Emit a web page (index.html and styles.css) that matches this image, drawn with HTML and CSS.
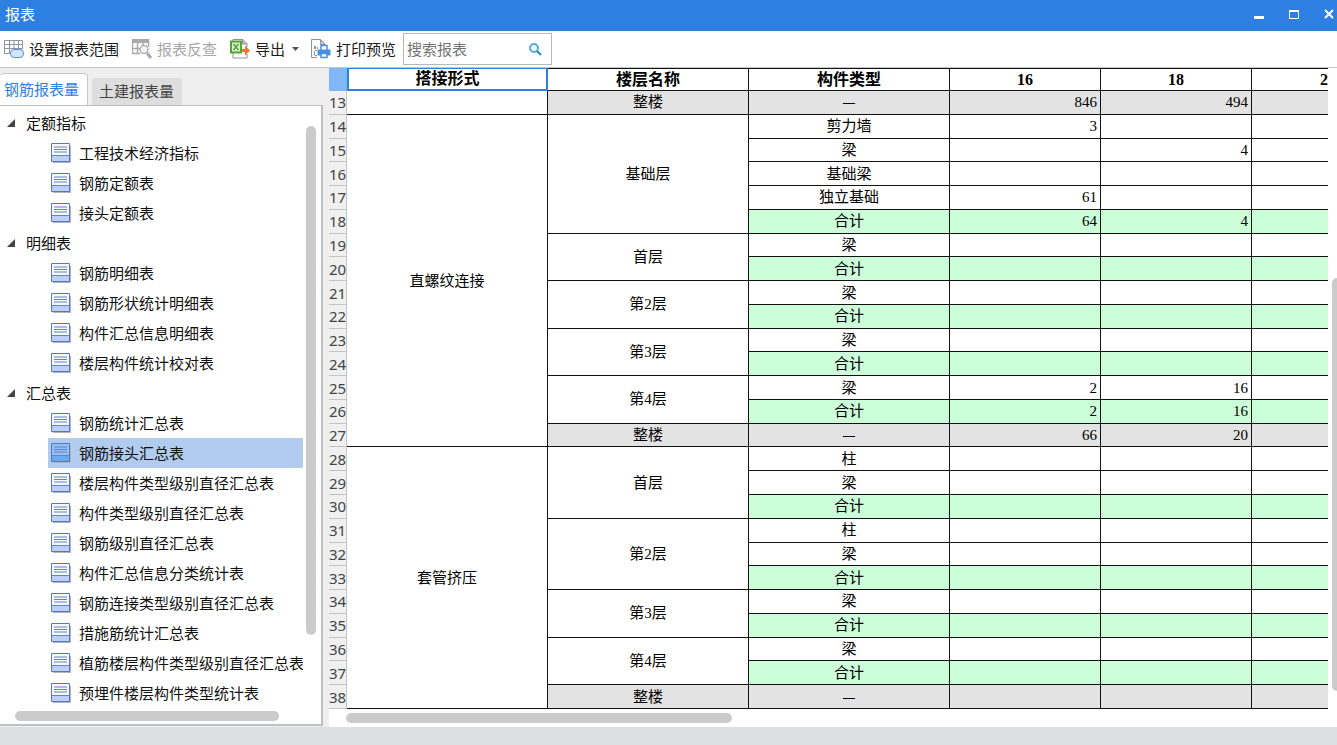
FILE: index.html
```html
<!DOCTYPE html>
<html lang="zh-CN">
<head>
<meta charset="utf-8">
<title>报表</title>
<link rel="stylesheet" href="styles.css">
</head>
<body>
<svg class="defs" aria-hidden="true">
  <symbol id="doc" viewBox="0 0 20 20">
    <path d="M2 3h18v17H2z" fill="#b4b4ba"/>
    <path d="M.5.5h18v18H.5z" fill="var(--paper,#f6f8ff)" stroke="#5578bd"/>
    <path d="M1 13h17v5H1z" fill="var(--foot,#bccfff)"/>
    <path d="M1 12.5h17" stroke="#6483cc"/>
    <path d="M3 4h13M3 6.500h13M3 9h13" stroke="#6580c4"/>
  </symbol>
</svg>
<div class="window">
  <header class="titlebar">
    <h1>报表</h1>
    <div class="winbtns">
      <button aria-label="最小化"><svg width="11" height="11" viewBox="0 0 11 11"><path d="M0 7h10v3H0z" fill="#fff"/></svg></button>
      <button aria-label="最大化"><svg width="11" height="11" viewBox="0 0 11 11"><path d="M.5 1.500h9v8h-9z" fill="none" stroke="#fff"/><path d="M0 1h10v2H0z" fill="#fff"/></svg></button>
      <button aria-label="关闭"><svg width="11" height="11" viewBox="0 0 11 11"><path d="M1 1l8 8M9 1l-8 8" stroke="#fff" stroke-width="2"/></svg></button>
    </div>
  </header>

  <div class="toolbar">
    <button class="tool"><svg width="20" height="20" viewBox="0 0 20 20"><path d="M.5 1.500h18v13H.5z" fill="#fff"/><path d="M.5 15V1.500h18V10M0 5.500h19M0 9.500h19M0 14.500h6M5.500 1v14M10 1v9M14.500 1v9" fill="none" stroke="#8d959e"/><rect x="6.500" y="10.500" width="13" height="8" rx="3.500" fill="#d3e5fb" stroke="#5a94dc"/></svg>设置报表范围</button>
    <button class="tool" disabled><svg width="20" height="20" viewBox="0 0 20 20"><path d="M0 0h17v4H0z" fill="#aaa"/><path d="M.5 15V.5h16V8M1 9.500h7M0 14.500h8M5.500 1v14M11 1v5" fill="none" stroke="#aaa" stroke-width="1.500"/><circle cx="12" cy="10.500" r="4" fill="#f4f4f4" stroke="#b0b0b0" stroke-width="1.500"/><path d="M15 14l4 5" stroke="#aaa" stroke-width="3"/></svg>报表反查</button>
    <button class="tool"><svg width="20" height="20" viewBox="0 0 20 20"><path d="M3 2V.5h10l4 4V8M3 14v5h14v-4" fill="none" stroke="#8b939b"/><path d="M12.500.5v4.500H17" fill="#b8bec5" stroke="#8b939b"/><path d="M1 2.500h10v11H1z" fill="#d9edcb" stroke="#5aa23a" stroke-width="2"/><path d="M3.500 5l5 6M8.500 5l-5 6" stroke="#5aa23a" stroke-width="1.500"/><path d="M12 10h3V6.500l5 5-5 5V13h-3z" fill="#f1762a"/></svg>导出<svg class="caret" width="7" height="5" viewBox="0 0 7 5"><path d="M0 0h7L3.500 4z" fill="#555"/></svg></button>
    <button class="tool"><svg width="20" height="20" viewBox="0 0 20 20"><path d="M6 18.500H.5V.5h9l5 5" fill="none" stroke="#8b939b"/><path d="M9.500.5v5H14z" fill="#cfd4d9" stroke="#8b939b"/><path d="M3 7h2v3H3zM6 8h1v2H6zM3 12h1v4H3zM4 11h2v1H4zM4 16h2v1H4z" fill="#8b939b"/><path d="M10 11V6.500h6V11" fill="#fff" stroke="#4a90e2" stroke-width="1.500"/><path d="M6.500 10.500h13v6h-13z" fill="#4a90e2"/><path d="M10 14.500h6v4h-6z" fill="#fff" stroke="#4a90e2" stroke-width="1.500"/></svg>打印预览</button>
    <label class="search"><input type="text" placeholder="搜索报表" aria-label="搜索报表"><svg width="13" height="13" viewBox="0 0 13 13"><circle cx="5" cy="5" r="4" fill="#eef8fd" stroke="#58acd8" stroke-width="2"/><path d="M8 8l4 4" stroke="#2787c4" stroke-width="2"/></svg></label>
  </div>

  <main class="content">
    <aside class="sidebar">
      <nav class="tabs"><button class="tab active">钢筋报表量</button><button class="tab">土建报表量</button></nav>
      <div class="treebox">
        <ul class="tree">
          <li class="group"><svg width="8" height="8" viewBox="0 0 8 8"><path d="M8 0v8H0z"/></svg>定额指标</li>
          <li><svg class="ic"><use href="#doc"/></svg>工程技术经济指标</li>
          <li><svg class="ic"><use href="#doc"/></svg>钢筋定额表</li>
          <li><svg class="ic"><use href="#doc"/></svg>接头定额表</li>
          <li class="group"><svg width="8" height="8" viewBox="0 0 8 8"><path d="M8 0v8H0z"/></svg>明细表</li>
          <li><svg class="ic"><use href="#doc"/></svg>钢筋明细表</li>
          <li><svg class="ic"><use href="#doc"/></svg>钢筋形状统计明细表</li>
          <li><svg class="ic"><use href="#doc"/></svg>构件汇总信息明细表</li>
          <li><svg class="ic"><use href="#doc"/></svg>楼层构件统计校对表</li>
          <li class="group"><svg width="8" height="8" viewBox="0 0 8 8"><path d="M8 0v8H0z"/></svg>汇总表</li>
          <li><svg class="ic"><use href="#doc"/></svg>钢筋统计汇总表</li>
          <li class="selected"><svg class="ic"><use href="#doc"/></svg>钢筋接头汇总表</li>
          <li><svg class="ic"><use href="#doc"/></svg>楼层构件类型级别直径汇总表</li>
          <li><svg class="ic"><use href="#doc"/></svg>构件类型级别直径汇总表</li>
          <li><svg class="ic"><use href="#doc"/></svg>钢筋级别直径汇总表</li>
          <li><svg class="ic"><use href="#doc"/></svg>构件汇总信息分类统计表</li>
          <li><svg class="ic"><use href="#doc"/></svg>钢筋连接类型级别直径汇总表</li>
          <li><svg class="ic"><use href="#doc"/></svg>措施筋统计汇总表</li>
          <li><svg class="ic"><use href="#doc"/></svg>植筋楼层构件类型级别直径汇总表</li>
          <li><svg class="ic"><use href="#doc"/></svg>预埋件楼层构件类型统计表</li>
        </ul>
        <div class="vbar"><div class="thumb"></div></div>
        <div class="hbar"><div class="thumb"></div></div>
      </div>
    </aside>

    <section class="report">
      <div class="sheet">
        <table>
          <colgroup><col class="c-no"><col class="c-text"><col class="c-text"><col class="c-text"><col class="c-num"><col class="c-num"><col></colgroup>
          <thead>
            <tr><th class="corner"></th><th class="picked">搭接形式</th><th>楼层名称</th><th>构件类型</th><th>16</th><th>18</th><th class="cut">2</th></tr>
          </thead>
          <tbody>
            <tr class="total"><th>13</th><td class="plain"></td><td>整楼</td><td class="dash">—</td><td class="n">846</td><td class="n">494</td><td></td></tr>
            <tr><th>14</th><td rowspan="14" class="plain">直螺纹连接</td><td rowspan="5" class="plain">基础层</td><td>剪力墙</td><td class="n">3</td><td></td><td></td></tr>
            <tr><th>15</th><td>梁</td><td></td><td class="n">4</td><td></td></tr>
            <tr><th>16</th><td>基础梁</td><td></td><td></td><td></td></tr>
            <tr><th>17</th><td>独立基础</td><td class="n">61</td><td></td><td></td></tr>
            <tr class="sum"><th>18</th><td>合计</td><td class="n">64</td><td class="n">4</td><td></td></tr>
            <tr><th>19</th><td rowspan="2" class="plain">首层</td><td>梁</td><td></td><td></td><td></td></tr>
            <tr class="sum"><th>20</th><td>合计</td><td></td><td></td><td></td></tr>
            <tr><th>21</th><td rowspan="2" class="plain">第2层</td><td>梁</td><td></td><td></td><td></td></tr>
            <tr class="sum"><th>22</th><td>合计</td><td></td><td></td><td></td></tr>
            <tr><th>23</th><td rowspan="2" class="plain">第3层</td><td>梁</td><td></td><td></td><td></td></tr>
            <tr class="sum"><th>24</th><td>合计</td><td></td><td></td><td></td></tr>
            <tr><th>25</th><td rowspan="2" class="plain">第4层</td><td>梁</td><td class="n">2</td><td class="n">16</td><td></td></tr>
            <tr class="sum"><th>26</th><td>合计</td><td class="n">2</td><td class="n">16</td><td></td></tr>
            <tr class="total"><th>27</th><td>整楼</td><td class="dash">—</td><td class="n">66</td><td class="n">20</td><td></td></tr>
            <tr><th>28</th><td rowspan="11" class="plain">套管挤压</td><td rowspan="3" class="plain">首层</td><td>柱</td><td></td><td></td><td></td></tr>
            <tr><th>29</th><td>梁</td><td></td><td></td><td></td></tr>
            <tr class="sum"><th>30</th><td>合计</td><td></td><td></td><td></td></tr>
            <tr><th>31</th><td rowspan="3" class="plain">第2层</td><td>柱</td><td></td><td></td><td></td></tr>
            <tr><th>32</th><td>梁</td><td></td><td></td><td></td></tr>
            <tr class="sum"><th>33</th><td>合计</td><td></td><td></td><td></td></tr>
            <tr><th>34</th><td rowspan="2" class="plain">第3层</td><td>梁</td><td></td><td></td><td></td></tr>
            <tr class="sum"><th>35</th><td>合计</td><td></td><td></td><td></td></tr>
            <tr><th>36</th><td rowspan="2" class="plain">第4层</td><td>梁</td><td></td><td></td><td></td></tr>
            <tr class="sum"><th>37</th><td>合计</td><td></td><td></td><td></td></tr>
            <tr class="total"><th>38</th><td>整楼</td><td class="dash">—</td><td></td><td></td><td></td></tr>
          </tbody>
        </table>
      </div>
      <div class="vbar"><div class="thumb"></div></div>
      <div class="hbar"><div class="thumb"></div></div>
    </section>
  </main>
  <footer class="status"></footer>
</div>
</body>
</html>
```
FILE: styles.css
```css
* { box-sizing: border-box; }
body {
  margin: 0;
  font: 15px/20px "Noto Sans CJK SC", sans-serif;
  color: #1c1c1c;
  background: #efefef;
}
button, input { font: inherit; color: inherit; }
button { border: 0; padding: 0; background: none; }
svg { flex: none; }
.defs { position: absolute; width: 0; height: 0; }
.window { display: flex; flex-direction: column; height: 100vh; overflow: hidden; }

.titlebar {
  flex: none;
  display: flex;
  align-items: center;
  justify-content: space-between;
  height: 31px;
  padding: 0 2px 3px 5px;
  background: #2d7fe2;
  color: #fff;
}
.titlebar h1 { margin: 0; font-size: 15px; font-weight: 400; }
.winbtns { display: flex; gap: 24px; }
.winbtns button { display: flex; }

.toolbar {
  flex: none;
  display: flex;
  align-items: center;
  height: 37px;
  padding: 0 3px;
  background: #fff;
  border-bottom: 1px solid #c3c7ca;
}
.tool {
  display: flex;
  align-items: center;
  gap: 5px;
  height: 26px;
  padding: 0 4px 0 1px;
  margin-right: 7px;
}
.tool:disabled { color: #a6a6a6; padding: 0 5px 0 2px; }
.caret { margin-left: 2px; }
.search {
  display: flex;
  align-items: center;
  width: 149px;
  height: 32px;
  margin-left: -4px;
  padding: 0 9px 0 3px;
  border: 1px solid #b8b8b8;
}
.search input { flex: 1; min-width: 0; padding: 0; border: 0; outline: 0; background: none; }
.search input::placeholder { color: #747474; opacity: 1; }

.content { flex: 1; min-height: 0; display: flex; gap: 6px; }
.sidebar { flex: none; width: 323px; display: flex; flex-direction: column; }
.tabs { display: flex; align-items: flex-end; gap: 4px; height: 37px; }
.tab {
  height: 27px;
  padding: 0 8px 2px 7px;
  border-radius: 4px 4px 0 0;
  background: #dedede;
  color: #444;
}
.tab.active {
  height: 32px;
  padding: 0 8px 2px 4px;
  border: solid #c6c6c6;
  border-width: 1px 1px 0 0;
  background: #fff;
  color: #2d7fe2;
}
.treebox {
  flex: 1;
  min-height: 0;
  display: grid;
  grid-template: 1fr 13px / 1fr 18px;
  border: solid #bfc0c4;
  border-width: 1px 2px 2px 0;
  margin-bottom: 1px;
  background: #fff;
}
.tree { margin: 0; padding: 2px 0 0; list-style: none; overflow: hidden; color: #111; }
.tree li {
  display: flex;
  align-items: center;
  gap: 8px;
  height: 30px;
  margin-left: 48px;
  padding-left: 3px;
  white-space: nowrap;
  overflow: hidden;
}
.tree .group { margin-left: 0; padding-left: 7px; gap: 11px; fill: #444; }
.tree .selected { background: #b1ccee; --paper: #92c2f3; --foot: #6baaee; }
.ic { width: 20px; height: 20px; }

.thumb { background: #cbcbcb; border-radius: 5px; }
.vbar { padding: 20px 5px 0 3px; }
.vbar .thumb { height: 87%; }
.hbar { grid-column: 1 / -1; padding-left: 15px; }
.hbar .thumb { width: 264px; height: 10px; }

.report {
  flex: 1;
  min-width: 0;
  display: grid;
  grid-template: 1fr 14px / 1fr 9px;
  row-gap: 4px;
  background: #fff;
}
.report .vbar { padding: 210px 0 0 4px; }
.report .vbar .thumb { height: 413px; border-radius: 5px 0 0 5px; }
.report .hbar { padding-left: 17px; }
.report .hbar .thumb { width: 386px; }

.sheet { min-height: 0; }
table {
  width: 100%;
  height: 100%;
  table-layout: fixed;
  border-collapse: separate;
  border-spacing: 0;
  font: 15px/20px "Liberation Serif", "Noto Sans CJK SC", serif;
  color: #000;
}
.c-no { width: 18px; }
.c-text { width: 201px; }
.c-num { width: 151px; }
td, th { padding: 0; text-align: center; border: solid #111; border-width: 0 1px 1px 0; }
td:last-child, th:last-child { border-right: 0; }
thead th { font-size: 16px; border-top-width: 1px; }
thead .corner { background: #7fb7f7; border: 0; }
thead .picked { border: 2px solid #2d7fe2; border-top-width: 1px; }
thead .cut { text-align: right; }
tbody th {
  background: #f0f0f0;
  border-color: #c4c4c4;
  font: 15px/20px "Noto Sans", sans-serif;
  color: #444;
}
td.n { text-align: right; padding-right: 3px; }
td.dash { font-family: "Noto Sans CJK SC", sans-serif; }
.sum td { background: #ccffd9; }
.total td { background: #e3e3e3; }
tbody td.plain { background: #fff; }

.status { flex: none; height: 18px; background: #dddee0; }
```
